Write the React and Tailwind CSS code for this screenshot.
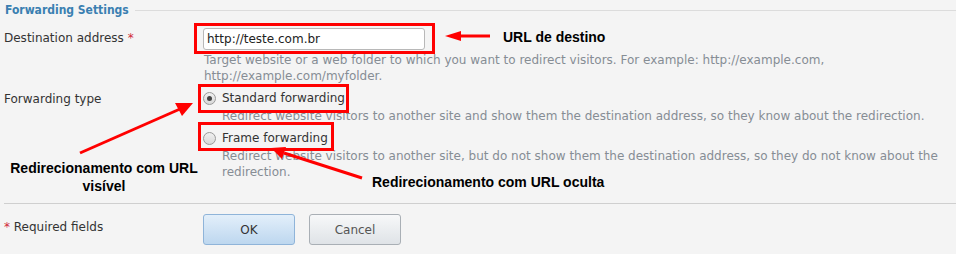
import React from "react";

const formFont = { fontFamily: '"DejaVu Sans", Verdana, sans-serif' };
const noteFont = { fontFamily: '"Liberation Sans", Arial, sans-serif' };

function Radio({ checked }) {
  return (
    <span className="inline-flex items-center justify-center w-[13px] h-[13px] rounded-full border border-[#9a9a9a] bg-gradient-to-b from-[#f0f0f0] to-[#d8d8d8]">
      {checked && <span className="w-[5px] h-[5px] rounded-full bg-[#444]" />}
    </span>
  );
}

export default function App() {
  return (
    <div className="relative w-[956px] h-[254px] overflow-hidden bg-[#f4f4f4] text-[#333]" style={formFont}>
      {/* ============ FORM ============ */}
      <div className="flex items-center gap-[6px] pl-[5px] pt-[2px] h-[18px]">
        <span className="text-[12px] font-bold text-[#3a7fb1] leading-none" style={{ fontFamily: '"DejaVu Sans Condensed", "DejaVu Sans", sans-serif' }}>
          Forwarding Settings
        </span>
        <div className="flex-1 h-px bg-[#dcdcdc]" />
      </div>

      <div className="flex pt-[10px]">
        <div className="w-[203px] shrink-0 pl-[4px] pt-[1px] text-[12px]">
          Destination address <span className="text-[#d0283a]">*</span>
        </div>
        <div className="flex flex-col flex-1 pr-[30px]">
          <div className="w-[222px] h-[22px] rounded-[3px] border border-[#b8b8b8] bg-white flex items-center pl-[3px] text-[12px] text-[#222]">
            http://teste.com.br
          </div>
          <p className="mt-[2px] text-[12px] leading-[16px] text-[#868d94] pl-px">
            Target website or a web folder to which you want to redirect visitors. For example: http://example.com,
            <br />
            http://example.com/myfolder.
          </p>
        </div>
      </div>

      <div className="flex pt-[6px]">
        <div className="w-[203px] shrink-0 pl-[4px] text-[12px]">Forwarding type</div>
        <div className="flex flex-col flex-1 pr-[30px]">
          <label className="flex items-center gap-[6px] text-[12px] h-[16px]">
            <Radio checked /> Standard forwarding
          </label>
          <p className="pl-[19px] mt-[2px] text-[12px] leading-[16px] text-[#868d94]">
            Redirect website visitors to another site and show them the destination address, so they know about the redirection.
          </p>
          <label className="flex items-center gap-[6px] text-[12px] h-[16px] mt-[6px]">
            <Radio /> Frame forwarding
          </label>
          <p className="pl-[19px] mt-[2px] text-[12px] leading-[16px] text-[#868d94] w-[735px]">
            Redirect website visitors to another site, but do not show them the destination address, so they do not know about the redirection.
          </p>
        </div>
      </div>

      <div className="ml-[4px] mt-[23px] h-px bg-[#cfcfcf]" />

      <div className="flex pt-[10px]">
        <div className="w-[203px] shrink-0 pl-[4px] pt-[4px] text-[12px]">
          <span className="text-[#d0283a]">*</span> Required fields
        </div>
        <div className="flex gap-[14px]">
          <button className="w-[92px] h-[31px] rounded-[3px] border border-[#8fb4d9] bg-gradient-to-b from-[#e3effa] to-[#bdd7ef] text-[12px] text-[#333]">
            OK
          </button>
          <button className="w-[92px] h-[31px] rounded-[3px] border border-[#a9afb5] bg-gradient-to-b from-[#f7f8f9] to-[#dfe3e7] text-[12px] text-[#555]">
            Cancel
          </button>
        </div>
      </div>

      {/* ============ ANNOTATIONS ============ */}
      <div className="absolute left-[194px] top-[23px] w-[241px] h-[31px] border-[3px] border-[#f00]" />
      <div className="absolute left-[198px] top-[84px] w-[151px] h-[29px] border-[3px] border-[#f00]" />
      <div className="absolute left-[198px] top-[122px] w-[136px] h-[29px] border-[3px] border-[#f00]" />

      <svg className="absolute inset-0" width="956" height="254">
        <line x1="490" y1="36" x2="458" y2="36" stroke="#f00" strokeWidth="3" />
        <polygon points="445,36 461,31 461,41" fill="#f00" />
        <line x1="80" y1="153" x2="180" y2="109" stroke="#f00" strokeWidth="3" />
        <polygon points="193,103 175,103 182,116" fill="#f00" />
        <line x1="362" y1="178" x2="284" y2="153" stroke="#f00" strokeWidth="3" />
        <polygon points="271,148 286,147 282,159" fill="#f00" />
      </svg>

      <div className="absolute left-[503px] top-[27px] text-[14px] font-bold text-black" style={noteFont}>
        URL de destino
      </div>
      <div className="absolute left-[8px] top-[159px] w-[192px] text-center text-[14px] leading-[18px] font-bold text-black" style={noteFont}>
        Redirecionamento com URL visível
      </div>
      <div className="absolute left-[372px] top-[174px] text-[14px] leading-[16px] font-bold text-black" style={noteFont}>
        Redirecionamento com URL oculta
      </div>
    </div>
  );
}
